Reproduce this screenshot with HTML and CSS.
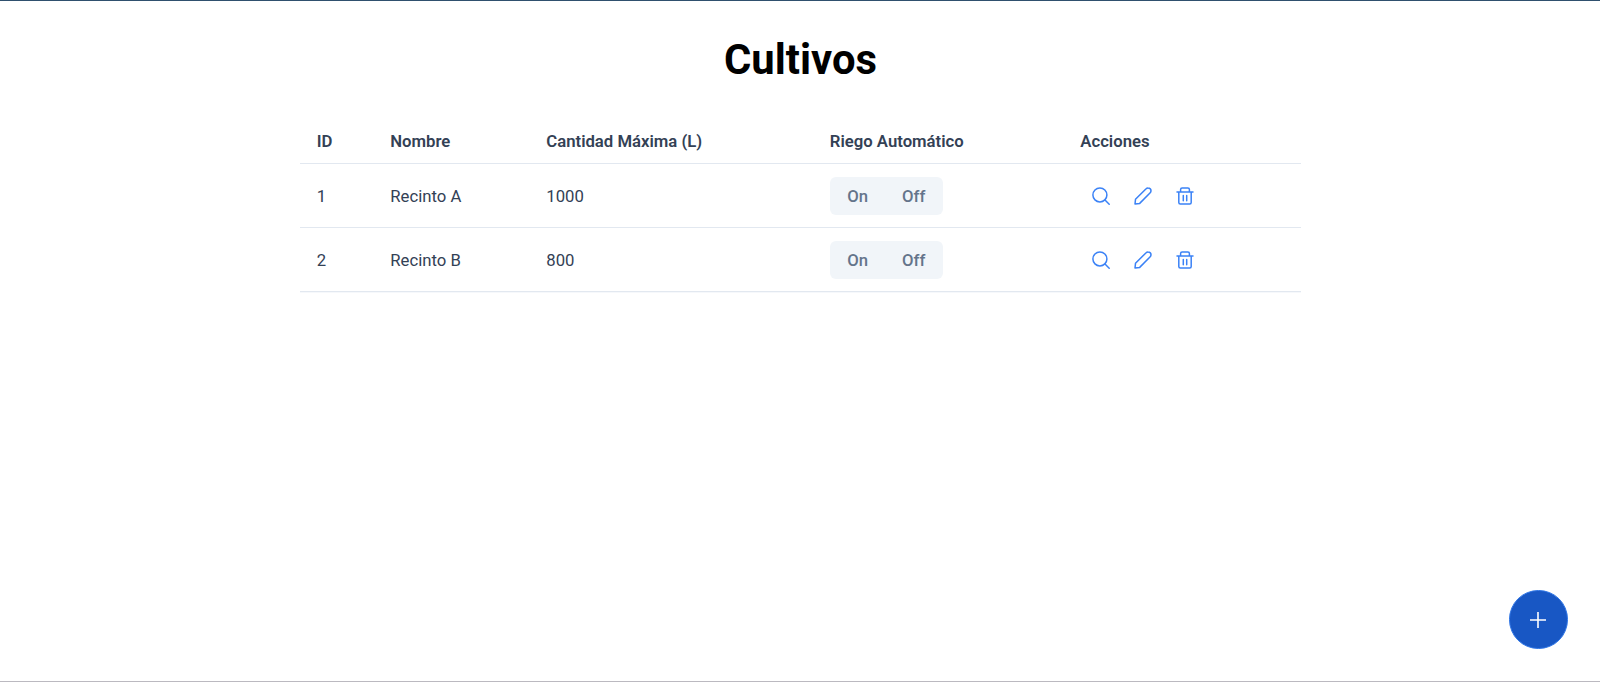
FILE: index.html
```html
<!DOCTYPE html>
<html lang="es">
<head>
<meta charset="utf-8">
<title>Cultivos</title>
<link rel="stylesheet" href="styles.css">
</head>
<body>
<svg class="sprite" aria-hidden="true">
  <symbol id="search" viewBox="0 0 18 18"><circle cx="7.9" cy="7.9" r="7"/><path d="M13 13l4.2 4.2"/></symbol>
  <symbol id="pencil" viewBox="0 0 18 18"><path d="M1 17l.5-4.700L12.100 1.700a2.500 2.500 0 0 1 1.900-.8c1.700 0 3 1.300 3 2.900 0 .8-.3 1.500-.8 2L5.700 16.400z"/></symbol>
  <symbol id="trash" viewBox="0 0 18 18"><path d="M1 5.100h16M2.800 5.100v10.400c0 .9.6 1.500 1.500 1.500h9.400c.9 0 1.500-.6 1.500-1.500V5.100M4.600 5.100V2.500c0-.9.6-1.500 1.500-1.500h5.800c.9 0 1.500.6 1.500 1.500v2.600M7.300 8.400v5.300M10.700 8.400v5.300"/></symbol>
</svg>
<main class="page">
  <h1 class="title">Cultivos</h1>
  <table class="table">
    <colgroup><col class="c-id"><col class="c-name"><col class="c-max"><col class="c-auto"><col></colgroup>
    <thead>
      <tr><th>ID</th><th>Nombre</th><th>Cantidad Máxima (L)</th><th>Riego Automático</th><th>Acciones</th></tr>
    </thead>
    <tbody>
      <tr>
        <td>1</td><td>Recinto A</td><td>1000</td>
        <td><div class="toggle"><span>On</span><span>Off</span></div></td>
        <td><div class="actions"><svg><use href="#search"/></svg><svg><use href="#pencil"/></svg><svg><use href="#trash"/></svg></div></td>
      </tr>
      <tr>
        <td>2</td><td>Recinto B</td><td>800</td>
        <td><div class="toggle"><span>On</span><span>Off</span></div></td>
        <td><div class="actions"><svg><use href="#search"/></svg><svg><use href="#pencil"/></svg><svg><use href="#trash"/></svg></div></td>
      </tr>
    </tbody>
  </table>
</main>
<button class="fab" aria-label="Agregar"><svg viewBox="0 0 16 16"><path d="M8 0v16M0 8h16"/></svg></button>
</body>
</html>
```

FILE: styles.css
```css
* { box-sizing: border-box; }
body { margin: 0; background: #fff; font-family: Roboto, sans-serif; font-size: 16.720px; color: #334155; }
.sprite { display: none; }
.page { height: 682px; border-top: 1px solid #2f506e; border-bottom: 1px solid #bbb9c0; }
.title { margin: 33px 0 0; padding-left: 1px; height: 51px; line-height: 51px; text-align: center; font-size: 41.800px; font-weight: 700; color: #000; }
.table { width: 1001px; margin: 33px auto 0 300px; border-collapse: separate; border-spacing: 0; table-layout: fixed; }
.c-id { width: 73.500px; }
.c-name { width: 156px; }
.c-max { width: 283.500px; }
.c-auto { width: 250.500px; }
th, td { padding: 0 0 0 16.800px; text-align: left; border-bottom: 1px solid #e2e8f0; }
th { height: 46px; font-weight: 600; }
td { height: 64px; }
tbody tr:last-child td { box-shadow: 0 1px #f6f8fb; }
.toggle { display: flex; width: 113px; height: 38px; align-items: center; padding-left: 17.500px; background: #f1f5f9; border-radius: 6px; color: #64748b; font-weight: 500; }
.toggle span:first-child { width: 54.700px; }
.actions { display: flex; gap: 23.800px; padding-left: 11.900px; }
.actions svg { width: 18px; height: 18px; fill: none; stroke: #3b82f6; stroke-width: 1.500; stroke-linecap: round; stroke-linejoin: round; }
.fab { position: fixed; left: 1509px; top: 590px; width: 58.500px; height: 58.500px; padding: 1px 0 0; display: flex; align-items: center; justify-content: center; border: 1px solid #2f76e6; border-radius: 50%; background: #1857c4; }
.fab svg { width: 16px; height: 16px; fill: none; stroke: #fff; stroke-width: 1.600; }
```
